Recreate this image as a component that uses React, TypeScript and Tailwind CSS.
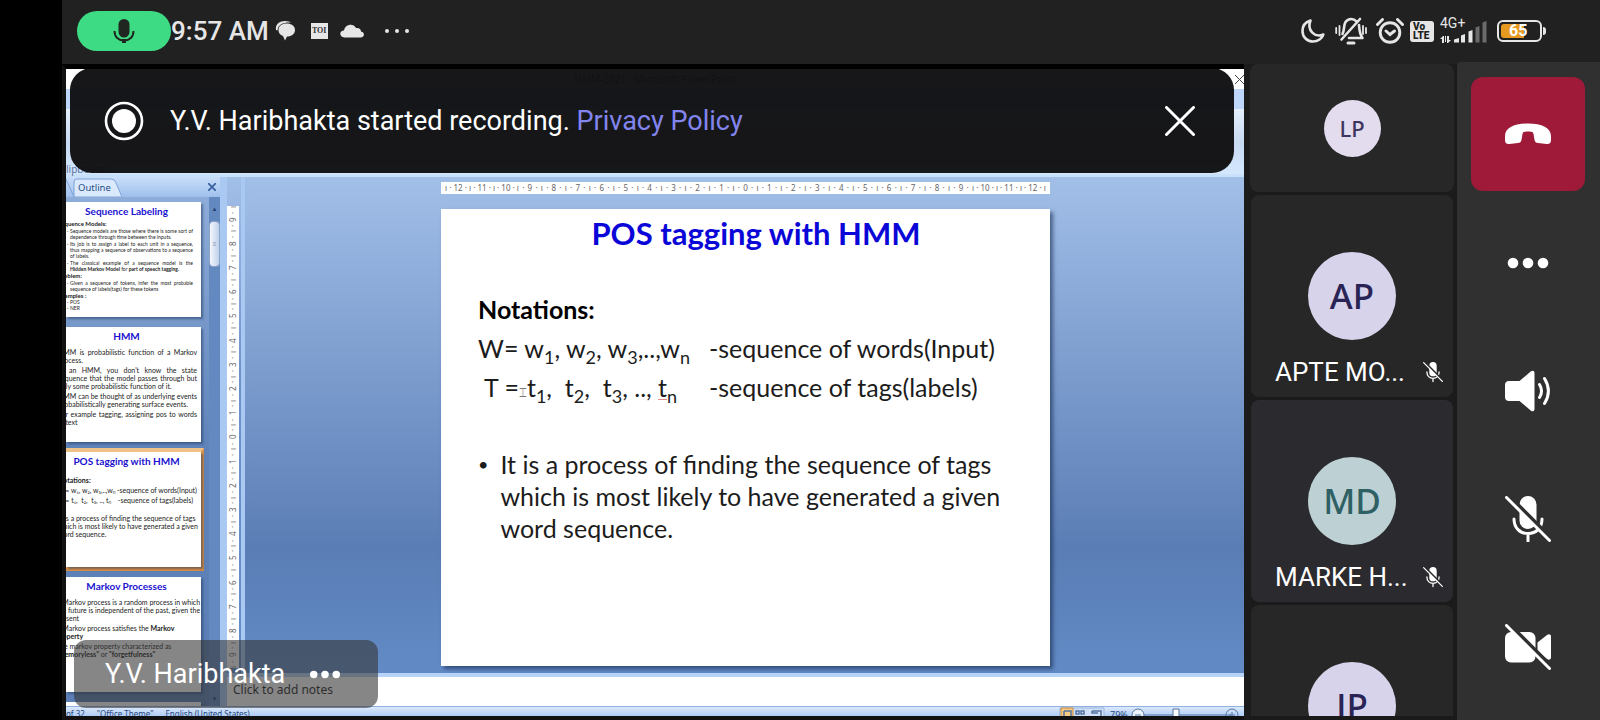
import type { ReactNode } from "react";

const roboto = "font-['Roboto','Liberation_Sans',sans-serif]";
const noto = "font-['Noto_Sans','Open_Sans',sans-serif]";

function MicOff({ className }: { className: string }) {
  return (
    <svg viewBox="0 0 46 46" className={className} fill="none" stroke="currentColor" strokeWidth="3" strokeLinecap="round" aria-hidden="true">
      <rect x="14.500" y="0" width="17" height="33" rx="8.500" fill="currentColor" stroke="none" />
      <path d="M9 23c0 9 6 14.500 14 14.500S37 32 37 23M23 38v7" />
      <path d="M3 -1L48 44" stroke="var(--cut)" strokeWidth="4" strokeLinecap="butt" />
      <path d="M1.500 1.500l43 43" />
    </svg>
  );
}

function Dots({ className, size = 5 }: { className: string; size?: number }) {
  return (
    <svg viewBox="0 0 42 12" className={className} fill="currentColor" aria-hidden="true">
      <circle cx="6" cy="6" r={size} />
      <circle cx="21" cy="6" r={size} />
      <circle cx="36" cy="6" r={size} />
    </svg>
  );
}

function StatusBar() {
  return (
    <header className={`flex h-16 shrink-0 items-center bg-[#212121] pr-[54px] pb-[2px] pl-[15px] text-[#e6e6e6] ${roboto}`}>
      <div className="flex h-10 w-[94px] items-center justify-center rounded-full bg-[#3ddc84] text-[#202720]">
        <svg viewBox="0 0 22 24" className="h-6 w-[22px]" fill="none" stroke="currentColor" strokeWidth="2" aria-hidden="true">
          <rect x="5.500" y="0" width="11" height="18.500" rx="5.500" fill="currentColor" stroke="none" />
          <path d="M1.500 12c0 6 4 9.500 9.500 9.500s9.500-3.500 9.500-9.500" />
          <path d="M11 20v4" strokeWidth="4" />
        </svg>
      </div>
      <span className="text-[26px] leading-8 font-medium">9:57 AM</span>
      <svg viewBox="0 0 20 20" className="ml-[6px] h-5 w-5" fill="currentColor" aria-hidden="true">
        <path d="M1 9C0 3 5 0 10 0c3 0 5 1 6 1.500C9 1 3 3 2.500 9.500z" />
        <path d="M11.500 2.500C16.500 2.500 20 5 20 9s-3.500 6.500-8 6.500L10 19.500 8 15C5 14 3.500 12 3.500 9c0-4 3.500-6.500 8-6.500z" />
      </svg>
      <span className="ml-4 flex h-4 w-[17px] items-center justify-center bg-[#e6e6e6] font-['Liberation_Serif',serif] text-[8px] leading-none font-bold text-[#333]">TOI</span>
      <svg viewBox="0 0 24 14" className="ml-3 h-[14px] w-6" fill="currentColor" aria-hidden="true">
        <path d="M4.500 13.500C-1 13-1 6.500 4 6.500 5 .5 13-1.500 16 4c3-.5 5 1 5 3.500 4 .5 4 6-.5 6z" />
      </svg>
      <svg viewBox="0 0 26 6" className="ml-5 h-[6px] w-[26px]" fill="currentColor" aria-hidden="true">
        <circle cx="3" cy="3" r="2" /><circle cx="13" cy="3" r="2" /><circle cx="23" cy="3" r="2" />
      </svg>

      <div className="ml-auto flex items-center">
        <svg viewBox="0 0 24 24" className="h-6 w-6" fill="none" stroke="currentColor" strokeWidth="2.600" strokeLinejoin="round" aria-hidden="true">
          <path d="M9.500 1.500C4.500 3 1.500 7 1.500 12c0 6 4.500 10.500 10.500 10.500 5 0 9-3 10.300-7-8.300 3.500-16.800-4-12.800-14z" />
        </svg>
        <svg viewBox="0 0 32 28" className="ml-[10px] h-7 w-8" fill="none" stroke="currentColor" strokeWidth="2.600" strokeLinecap="round" strokeLinejoin="round" aria-hidden="true">
          <path d="M7.500 17c2-3 1-9 3-12 3-4 8-4 11-.5M24 8c.5 5 .5 9 3.500 13H14M6.500 22.500L25 2" />
          <path d="M13 26h6" strokeWidth="3" />
          <path d="M1.200 11v5M4.500 9v9M28 9v8M31 11v5" strokeWidth="1.800" />
        </svg>
        <svg viewBox="0 0 28 26" className="ml-[9px] h-[26px] w-7" fill="none" stroke="currentColor" strokeWidth="2.900" strokeLinecap="round" aria-hidden="true">
          <circle cx="14" cy="14.500" r="9.800" />
          <path d="M10 13l4 3.500 4.500-3.500M1.500 6.500l5-5M26.500 6.500l-5-5" />
        </svg>
        <span className="ml-[6px] flex h-[21px] w-6 flex-col justify-center rounded-[3px] bg-[#e6e6e6] pl-[3px] text-[10px] leading-[9px] font-black text-[#212121]">
          <span>Vo</span>
          <span>LTE</span>
        </span>
        <span className="ml-[6px] flex h-[26px] w-12 flex-col">
          <span className="h-[11px] text-[14px] leading-[11px]">4G+</span>
          <svg viewBox="0 0 48 24" className="-mt-[10px] h-6 w-12 shrink-0" fill="currentColor" aria-hidden="true">
            <path d="M3 17l-3 3h2v4h2v-7zM8 24l3-3H9v-4H7v7zM5 17h1v6H5z" />
            <path d="M14 23.500v-3l5-1.500v4.500zM21 23.500v-7l4-1.500v8.500zM28.500 23.500v-11l4-1.500v12.500z" />
            <path d="M35.500 23.500v-15l4-1.500v16.500zM42.500 23.500v-20l4-1.500v21.500z" fill="#6b6b6b" />
          </svg>
        </span>
        <span className="ml-[9px] flex h-[22px] w-[45px] items-center rounded-[6px] border-2 border-[#e6e6e6] p-[2px]">
          <span className="flex h-full w-[23px] items-center rounded-l-[3px] bg-[#e69a20] pl-2 text-[16px] leading-none font-bold text-white">65</span>
        </span>
        <span className="ml-px h-2 w-[3px] rounded-r-sm bg-[#e6e6e6]" />
      </div>
    </header>
  );
}

function Cells({ values }: { values: number[] }) {
  return (
    <>
      {values.map((v, i) => (
        <span key={i} className="flex flex-1 items-center">
          <i className="flex basis-px justify-center not-italic">ı</i>
          <span className="flex flex-1 items-center justify-evenly">
            <i className="not-italic">·</i>
            <i className="not-italic">{Math.abs(v)}</i>
            <i className="not-italic">·</i>
          </span>
        </span>
      ))}
      <span>ı</span>
    </>
  );
}

const range = (n: number) => Array.from({ length: n * 2 + 1 }, (_, i) => i - n);

function HorizontalRuler() {
  return (
    <div className={`flex h-3 items-center bg-white px-1 text-[8px] leading-3 text-[#666] ${noto}`}>
      <Cells values={range(12)} />
    </div>
  );
}

function VerticalRuler() {
  return (
    <div className={`mt-[29px] mb-[5px] flex w-3 rotate-180 items-center bg-white py-px text-[8px] leading-3 text-[#666] [writing-mode:vertical-rl] ${noto}`}>
      <Cells values={range(9)} />
    </div>
  );
}

function Thumb({ title, active, children }: { title: string; active?: boolean; children?: ReactNode }) {
  return (
    <div className={active ? "-my-1 -mr-[3px] border-y-4 border-r-[3px] border-[#d98f45] border-t-[#efc28a]" : ""}>
      <div className="flex h-[115px] justify-end overflow-hidden bg-white shadow-[2px_2px_2px_rgba(30,50,90,0.5)]">
        <div className="w-[153px] shrink-0 pt-[3px] pr-1 pl-2 text-[7px] leading-[8px] text-[#222]">
          <h3 className="mb-1 text-center text-[10px] leading-[12px] font-bold text-[#1a10d0]">{title}</h3>
          {children}
        </div>
      </div>
    </div>
  );
}

function OutlinePane() {
  return (
    <aside className="flex w-[161px] shrink-0 flex-col overflow-hidden border-r-[7px] border-[#a9c8f2] bg-[#8eadd9]">
      <div className={`flex h-5 shrink-0 items-center justify-between bg-gradient-to-b from-[#c9defa] to-[#9fc0ec] pr-1 text-[#274b86] ${noto}`}>
        <svg viewBox="0 0 56 20" className="h-5 w-14" aria-hidden="true">
          <path d="M-1 0L8 20M8 20V5q0-3 3-3h34q4 0 5 4l6 14z" fill="#dbe9fc" stroke="#7fa3d6" />
          <text x="12" y="14" fontSize="9.500" fill="#274b86">Outline</text>
        </svg>
        <svg viewBox="0 0 8 8" className="h-2 w-2" stroke="#3c64a0" strokeWidth="1.800" aria-hidden="true"><path d="M0 0l8 8M8 0L0 8" /></svg>
      </div>
      <div className="flex min-h-0 flex-1">
        <div className="flex min-w-0 flex-1 flex-col gap-[10px] overflow-hidden bg-gradient-to-b from-[#8eadd9] via-[#5f83b9] to-[#5b7fb5] pt-[5px] pr-2 font-['Lato','Open_Sans',sans-serif]">
          <Thumb title="Sequence Labeling">
            <div className="pr-1 pl-[2px] text-justify text-[5px] leading-[6px]">
              <p className="text-[6px] font-bold">Sequence Models:</p>
              <ul className="mt-px ml-3 flex list-['-_'] flex-col gap-px">
                <li>Sequence models are those where there is some sort of dependence through time between the inputs.</li>
                <li>Its job is to assign a label to each unit in a sequence, thus mapping a sequence of observations to a sequence of labels.</li>
                <li>The classical example of a sequence model is the <b>Hidden Markov Model</b> for <b>part of speech tagging.</b></li>
              </ul>
              <p className="mt-px text-[6px] font-bold">Problem:</p>
              <ul className="mt-px ml-3 list-['-_']">
                <li>Given a sequence of tokens, infer the most probable sequence of labels(tags) for these tokens</li>
              </ul>
              <p className="mt-px text-[6px] font-bold">Examples :</p>
              <ul className="ml-3 list-['-_']">
                <li>POS</li>
                <li>NER</li>
              </ul>
            </div>
          </Thumb>
          <Thumb title="HMM">
            <div className="mt-[6px] pl-[2px] text-justify">
              <p>HMM is probabilistic function of a Markov process.</p>
              <p className="mt-[2px]">In an HMM, you don't know the state sequence that the model passes through but only some probabilistic function of it.</p>
              <p className="mt-[2px]">HMM can be thought of as underlying events probabilistically generating surface events.</p>
              <p className="mt-[2px]">For example tagging, assigning pos to words in text</p>
            </div>
          </Thumb>
          <Thumb title="POS tagging with HMM" active>
            <div className="pl-[2px] whitespace-nowrap">
              <p className="mt-[9px] font-bold">Notations:</p>
              <div className="mt-[2px] flex justify-between">
                <span>W= w₁, w₂, w₃,..,wₙ</span>
                <span>-sequence of words(Input)</span>
              </div>
              <div className="mt-[2px] flex justify-between pr-1">
                <span>&nbsp;T = t₁, &nbsp;t₂, &nbsp;t₃, .., tₙ</span>
                <span>-sequence of tags(labels)</span>
              </div>
              <p className="mt-[10px]">It is a process of finding the sequence of tags<br />which is most likely to have generated a given<br />word sequence.</p>
            </div>
          </Thumb>
          <Thumb title="Markov Processes">
            <div className="mt-[6px] whitespace-nowrap">
              <p>A Markov process is a random process in which<br />the future is independent of the past, given the<br />present</p>
              <p className="mt-[2px]">A Markov process satisfies the <b>Markov<br />property</b></p>
              <p className="mt-[2px]">The markov property characterized as<br /><b>"memoryless"</b> or <b>"forgetfulness"</b></p>
            </div>
          </Thumb>
          <Thumb title="" />
        </div>
        <div className="flex w-[11px] shrink-0 flex-col items-center bg-[#6488c0]">
          <span className="flex h-6 items-center text-[6px] leading-none text-[#24406f]">▲</span>
          <span className="flex h-[46px] w-full items-center justify-center rounded-sm border border-[#8da4c8] bg-gradient-to-r from-[#f4f7fd] to-[#c0d0ea] text-[6px] text-[#7b8cab]">≡</span>
          <span className="mt-auto pb-1 text-[6px] leading-none text-[#24406f]">▼</span>
        </div>
      </div>
    </aside>
  );
}

const Sub = ({ children }: { children: ReactNode }) => <span className="relative top-[6px] text-[18px] leading-none">{children}</span>;

function Slide() {
  return (
    <article className="mt-[15px] h-[457px] bg-white pr-10 pl-[37px] font-['Lato','Open_Sans',sans-serif] text-[25px] leading-8 text-[#1c1c1c] shadow-[3px_3px_4px_rgba(20,40,80,0.6)]">
      <h1 className="pt-[6px] pl-6 text-center text-[31px] leading-9 font-bold text-[#0a06d8]">POS tagging with HMM</h1>
      <p className="mt-10 font-bold leading-9 text-black">Notations:</p>
      <dl className="mt-[2px] grid grid-cols-[231px_1fr] leading-[39px] whitespace-pre">
        <dt>W= w<Sub>1</Sub>, w<Sub>2</Sub>, w<Sub>3</Sub>,..,w<Sub>n</Sub></dt>
        <dd>-sequence of words(Input)</dd>
        <dt className="pl-[6px]">T =<span className="font-['Liberation_Serif',serif] text-[13px] text-[#777]">⌶</span>t<Sub>1</Sub>,  t<Sub>2</Sub>,  t<Sub>3</Sub>, .., <span className="underline decoration-[#e08a8a] decoration-1 underline-offset-2">t<Sub>n</Sub></span></dt>
        <dd>-sequence of tags(labels)</dd>
      </dl>
      <ul className="mt-9">
        <li className="flex gap-3">
          <span className="text-[18px]">•</span>
          <span>It is a process of finding the sequence of tags which is most likely to have generated a given word sequence.</span>
        </li>
      </ul>
    </article>
  );
}

function SharedScreen() {
  return (
    <main className="relative flex min-w-0 flex-1 flex-col overflow-hidden border-t-[5px] border-b-4 border-l-4 border-[#111] border-t-black bg-[#a3c0ea]">
      <div className={`shrink-0 text-[10px] text-[#5d759f] ${noto}`}>
        <div className="flex h-5 items-center justify-center bg-white text-[10px] text-[#333]">
          <span className="flex-1" />
          <span>HMM-2021 - Microsoft PowerPoint</span>
          <span className="flex flex-1 justify-end">
            <svg viewBox="0 0 9 9" className="h-[9px] w-[9px]" stroke="#444" aria-hidden="true"><path d="M0 0l9 9M9 0L0 9" /></svg>
          </span>
        </div>
        <div className="h-5 bg-[#bdd6fa]" />
        <div className="flex h-[68px] items-end border-b-[3px] border-[#c9e0fa] bg-gradient-to-b from-[#e5effc] via-[#c8daf2] to-[#d3e7fd] leading-[10px]">lipboard</div>
      </div>
      <div className="flex min-h-0 flex-1">
        <OutlinePane />
        <div className="flex min-w-0 flex-1 flex-col">
          <div className="flex min-h-0 flex-1 bg-gradient-to-b from-[#a2bfe8] via-[#6e92c8] via-40% to-[#628bc5]">
            <VerticalRuler />
            <div className="ml-[2px] flex min-w-0 flex-1 border-l-4 border-[#a9c8f2] bg-gradient-to-b from-[#a2bfe8] via-[#5a7db5] via-75% to-[#628bc5] pt-[5px]">
              <div className="mr-auto ml-[196px] w-[609px]">
                <HorizontalRuler />
                <Slide />
              </div>
            </div>
          </div>
          <div className={`h-[33px] shrink-0 border-t-4 border-[#b7d3f8] bg-white pl-[6px] text-[12px] leading-[26px] text-[#222] ${noto}`}>Click to add notes</div>
        </div>
      </div>
      <footer className={`flex h-[10px] shrink-0 gap-3 overflow-hidden border-t border-[#8fb0e0] bg-gradient-to-b from-[#dce9fc] to-[#afcdf5] text-[8px] leading-[14px] text-[#2a4a80] ${noto}`}>
        <span>of 32</span>
        <span>"Office Theme"</span>
        <span>English (United States)</span>
        <span className="ml-auto flex items-center">
          <svg viewBox="0 0 186 10" className="h-[10px] w-[186px]" fill="none" stroke="#55749f" aria-hidden="true">
            <path d="M2 1h44v10H2z" fill="#cfe0f8" stroke="#9bb5dc" />
            <path d="M3 1h12v10H3z" fill="#f7cb83" stroke="#c98d3c" />
            <path d="M6 4h7v6M6 4v6M18 4h3v3h-3zM23 4h3v3h-3zM34 4h9v5M34 4v2h6" strokeWidth="1.500" />
            <path d="M86 8h87" />
            <circle cx="80" cy="8" r="6" fill="#eef4fd" /><path d="M77 8h6M171 8h6M174 5v6" />
            <path d="M115 2h6v9h-6z" fill="#fff" />
            <circle cx="174" cy="8" r="6" /><text x="52" y="11" fontSize="9" fill="#2a4a80" stroke="none">79%</text>
          </svg>
        </span>
      </footer>

      <div role="status" className={`absolute inset-x-1 right-[10px] -top-px flex h-[105px] items-center rounded-[22px] bg-[#0f1012]/97 pr-[39px] pl-[34px] text-[27px] leading-8 text-white ${roboto}`}>
        <svg viewBox="0 0 40 40" className="h-10 w-10" fill="none" aria-hidden="true">
          <circle cx="20" cy="20" r="18" stroke="white" strokeWidth="2.600" />
          <circle cx="20" cy="20" r="12" fill="white" />
        </svg>
        <p className="ml-[26px]">Y.V. Haribhakta started recording. <a href="#privacy" className="text-[#8385ee]">Privacy Policy</a></p>
        <button type="button" aria-label="Dismiss" className="ml-auto">
          <svg viewBox="0 0 30 30" className="h-[30px] w-[30px]" fill="none" stroke="white" strokeWidth="3" strokeLinecap="round" aria-hidden="true">
            <path d="M1.500 1.500l27 27M28.500 1.500l-27 27" />
          </svg>
        </button>
      </div>

      <div className={`absolute bottom-2 left-2 flex h-[68px] items-center gap-6 rounded-[12px] bg-[#363636]/60 pr-[37px] pl-[31px] text-[27px] text-white ${roboto}`}>
        <span>Y.V. Haribhakta</span>
        <button type="button" aria-label="Presenter options"><Dots className="h-[9px] w-8" size={5} /></button>
      </div>
    </main>
  );
}

function Tile({ initials, name, avatar, tile = "bg-[#272727]" }: { initials: string; name?: string; avatar: string; tile?: string }) {
  return (
    <li className={`mx-px flex h-[202px] shrink-0 flex-col items-center rounded-lg pt-[57px] ${tile}`}>
      <span className={`flex h-[88px] w-[88px] shrink-0 items-center justify-center rounded-full text-[35px] font-medium ${noto} ${avatar}`}>{initials}</span>
      {name && (
        <span className="mt-4 flex w-full items-center justify-between pr-[10px] pl-6 text-[26px] leading-8 text-white [--cut:#272727]">
          <span>{name}</span>
          <MicOff className="h-5 w-5 overflow-visible" />
        </span>
      )}
    </li>
  );
}

function Participants() {
  return (
    <ul className={`flex w-[213px] shrink-0 flex-col gap-[3px] overflow-hidden border-b-4 border-[#1a1a1a] bg-[#1b1b1b] pr-[3px] pl-[6px] ${roboto}`}>
      <li className="flex h-32 shrink-0 items-center justify-center rounded-lg bg-[#272727]">
        <span className={`flex h-[57px] w-[57px] items-center justify-center rounded-full bg-[#e2dcee] text-[22px] font-medium text-[#3d3560] ${noto}`}>LP</span>
      </li>
      <Tile initials="AP" name="APTE MO..." avatar="bg-[#d6d3ea] text-[#2a2355]" />
      <Tile initials="MD" name="MARKE H..." avatar="bg-[#bdd1d5] text-[#2f6063]" tile="bg-[#2b2a2f]" />
      <Tile initials="JP" avatar="bg-[#d6d3ea] text-[#2a2355]" />
    </ul>
  );
}

function CallControls() {
  const item = "flex h-32 w-full items-center justify-center";
  return (
    <nav aria-label="Call controls" className="-mt-[2px] flex w-[143px] shrink-0 flex-col items-center overflow-hidden rounded-tl-sm bg-[#303030] pt-[15px] pr-[2px] text-white [--cut:#303030]">
      <button type="button" aria-label="Hang up" className="mb-2 flex h-[114px] w-[114px] shrink-0 items-center justify-center rounded-[12px] bg-[#9e1a38]">
        <svg viewBox="0 0 46 22" className="h-[22px] w-[46px]" fill="currentColor" aria-hidden="true">
          <path d="M0 13C0 5 9 .5 23 .5S46 5 46 13v4c0 3-1.500 4.500-4.500 4L33 20c-2-.3-3-1-3.500-3L28.500 11c-.2-1.500-1-2-2.500-2.200-2-.3-4-.3-6 0-1.500.200-2.300.7-2.500 2.200l-1 6c-.5 2-1.500 2.700-3.500 3L4.500 21C1.500 21.500 0 20 0 17z" />
        </svg>
      </button>
      <button type="button" aria-label="More options" className={item}><Dots className="h-3 w-[42px]" size={5.3} /></button>
      <button type="button" aria-label="Speaker" className={item}>
        <svg viewBox="0 0 46 42" className="h-[42px] w-[46px]" fill="none" stroke="currentColor" strokeWidth="3" strokeLinecap="round" aria-hidden="true">
          <path d="M4 11h10.500L26 1.300C27.500 0 29.500.8 29.500 3v36c0 2.200-2 3-3.500 1.700L14.500 31H4c-2.500 0-4-1.500-4-4V15c0-2.500 1.500-4 4-4z" fill="currentColor" stroke="none" />
          <path d="M34.500 14.500c2.500 4 2.500 9 0 13M39.500 8.500c5 8 5 17 0 25" />
        </svg>
      </button>
      <button type="button" aria-label="Unmute microphone" className={item}><MicOff className="h-[46px] w-[46px]" /></button>
      <button type="button" aria-label="Turn camera on" className={item}>
        <svg viewBox="0 0 46 46" className="h-[46px] w-[46px]" fill="none" stroke="currentColor" strokeWidth="3" strokeLinecap="round" aria-hidden="true">
          <rect x="0" y="8" width="30.500" height="30.500" rx="6" fill="currentColor" stroke="none" />
          <path d="M32.500 18.500L42 11c2-1.500 4-.5 4 1.500v21c0 2-2 3-4 1.500l-9.500-7z" fill="currentColor" stroke="none" />
          <path d="M3 -1L49 45" stroke="#303030" strokeWidth="4" strokeLinecap="butt" />
          <path d="M1.500 1.500l43 43" />
        </svg>
      </button>
    </nav>
  );
}

export default function App() {
  return (
    <div className="flex h-screen flex-col overflow-hidden border-l-[62px] border-black bg-[#1b1b1b]">
      <StatusBar />
      <div className="flex min-h-0 flex-1">
        <SharedScreen />
        <Participants />
        <CallControls />
      </div>
    </div>
  );
}
